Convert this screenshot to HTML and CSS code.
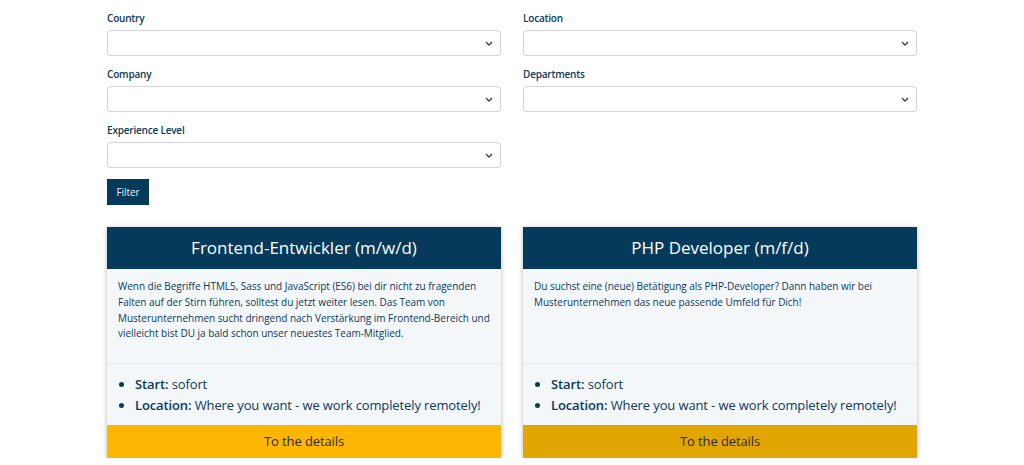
FILE: index.html
```html
<!DOCTYPE html>
<html lang="de">
<head>
<meta charset="utf-8">
<title>Jobs</title>
<link rel="stylesheet" href="styles.css">
</head>
<body>
<div class="container">
  <form class="filters">
    <div class="field">
      <label class="label">Country</label>
      <div class="select"><svg class="chev" width="8" height="5" viewBox="0 0 8 5"><path d="M1 1l3 3 3-3" fill="none" stroke="#444" stroke-width="1.4"/></svg></div>
    </div>
    <div class="field">
      <label class="label">Location</label>
      <div class="select"><svg class="chev" width="8" height="5" viewBox="0 0 8 5"><path d="M1 1l3 3 3-3" fill="none" stroke="#444" stroke-width="1.4"/></svg></div>
    </div>
    <div class="field">
      <label class="label">Company</label>
      <div class="select"><svg class="chev" width="8" height="5" viewBox="0 0 8 5"><path d="M1 1l3 3 3-3" fill="none" stroke="#444" stroke-width="1.4"/></svg></div>
    </div>
    <div class="field">
      <label class="label">Departments</label>
      <div class="select"><svg class="chev" width="8" height="5" viewBox="0 0 8 5"><path d="M1 1l3 3 3-3" fill="none" stroke="#444" stroke-width="1.4"/></svg></div>
    </div>
    <div class="field">
      <label class="label">Experience Level</label>
      <div class="select"><svg class="chev" width="8" height="5" viewBox="0 0 8 5"><path d="M1 1l3 3 3-3" fill="none" stroke="#444" stroke-width="1.4"/></svg></div>
    </div>
  </form>
  <div class="actions"><button class="btn-filter" type="button">Filter</button></div>
  <div class="cards">
    <div class="card">
      <div class="card-head">Frontend-Entwickler (m/w/d)</div>
      <div class="card-body">Wenn die Begriffe HTML5, Sass und JavaScript (ES6) bei dir nicht zu fragenden Falten auf der Stirn führen, solltest du jetzt weiter lesen. Das Team von Musterunternehmen sucht dringend nach Verstärkung im Frontend-Bereich und vielleicht bist DU ja bald schon unser neuestes Team-Mitglied.</div>
      <ul class="card-list">
        <li><b>Start:</b> sofort</li>
        <li><b>Location:</b> Where you want - we work completely remotely!</li>
      </ul>
      <div class="card-btn">To the details</div>
    </div>
    <div class="card">
      <div class="card-head">PHP Developer (m/f/d)</div>
      <div class="card-body">Du suchst eine (neue) Betätigung als PHP-Developer? Dann haben wir bei Musterunternehmen das neue passende Umfeld für Dich!</div>
      <ul class="card-list">
        <li><b>Start:</b> sofort</li>
        <li><b>Location:</b> Where you want - we work completely remotely!</li>
      </ul>
      <div class="card-btn card-btn-hover">To the details</div>
    </div>
  </div>
</div>
</body>
</html>
```

FILE: styles.css
```css
* { box-sizing: border-box; }
html, body { margin: 0; padding: 0; background: #fff; }
body {
  font-family: "Open Sans", "Noto Sans", sans-serif;
  color: #0b3a5c;
  overflow: hidden;
}
.container {
  width: 810px;
  margin: 0 auto;
  padding-top: 10px;
}
.filters {
  display: grid;
  grid-template-columns: 1fr 1fr;
  column-gap: 22px;
  row-gap: 10px;
  margin: 0;
}
.field { display: flex; flex-direction: column; }
.label {
  font-size: 10px;
  letter-spacing: -0.2px;
  line-height: 16px;
  font-weight: 600;
  color: #0b3a5c;
  margin-bottom: 4px;
}
.select {
  height: 26px;
  border: 1px solid #d3d6d9;
  border-radius: 3px;
  background: #fff;
  display: flex;
  align-items: center;
  justify-content: flex-end;
  padding-right: 7px;
}
.chev { display: block; }
.actions { margin-top: 11px; }
.btn-filter {
  height: 26px;
  width: 42px;
  border: 0;
  border-radius: 0;
  background: #063a5a;
  color: #e6edf2;
  font-family: "Open Sans", sans-serif;
  font-size: 10px;
  letter-spacing: -0.1px;
  padding: 0;
}
.cards {
  margin-top: 22px;
  display: grid;
  grid-template-columns: 1fr 1fr;
  column-gap: 22px;
}
.card {
  display: flex;
  flex-direction: column;
  background: #f4f7fa;
  box-shadow: 0 1px 5px rgba(0, 0, 0, 0.28);
}
.card-head {
  height: 42px;
  background: #063a5a;
  color: #fff;
  font-size: 17px;
  line-height: 42px;
  text-align: center;
}
.card-body {
  flex: 1;
  min-height: 95px;
  padding: 10px 8px 10px 11px;
  font-size: 10px;
  letter-spacing: -0.03px;
  line-height: 15.8px;
  color: #0b3a5c;
  border-bottom: 1px solid #e6ebf0;
}
.card-list {
  margin: 0;
  padding: 10px 0 10px 28px;
  font-size: 13px;
  letter-spacing: -0.12px;
  line-height: 20.5px;
  color: #0b3a5c;
}
.card-list b { font-weight: 600; }
.card-btn {
  height: 33px;
  line-height: 33px;
  text-align: center;
  background: #fdb702;
  color: #2a2a24;
  font-size: 13px;
  letter-spacing: -0.1px;
}
.card-btn-hover { background: #e2a604; }
```
